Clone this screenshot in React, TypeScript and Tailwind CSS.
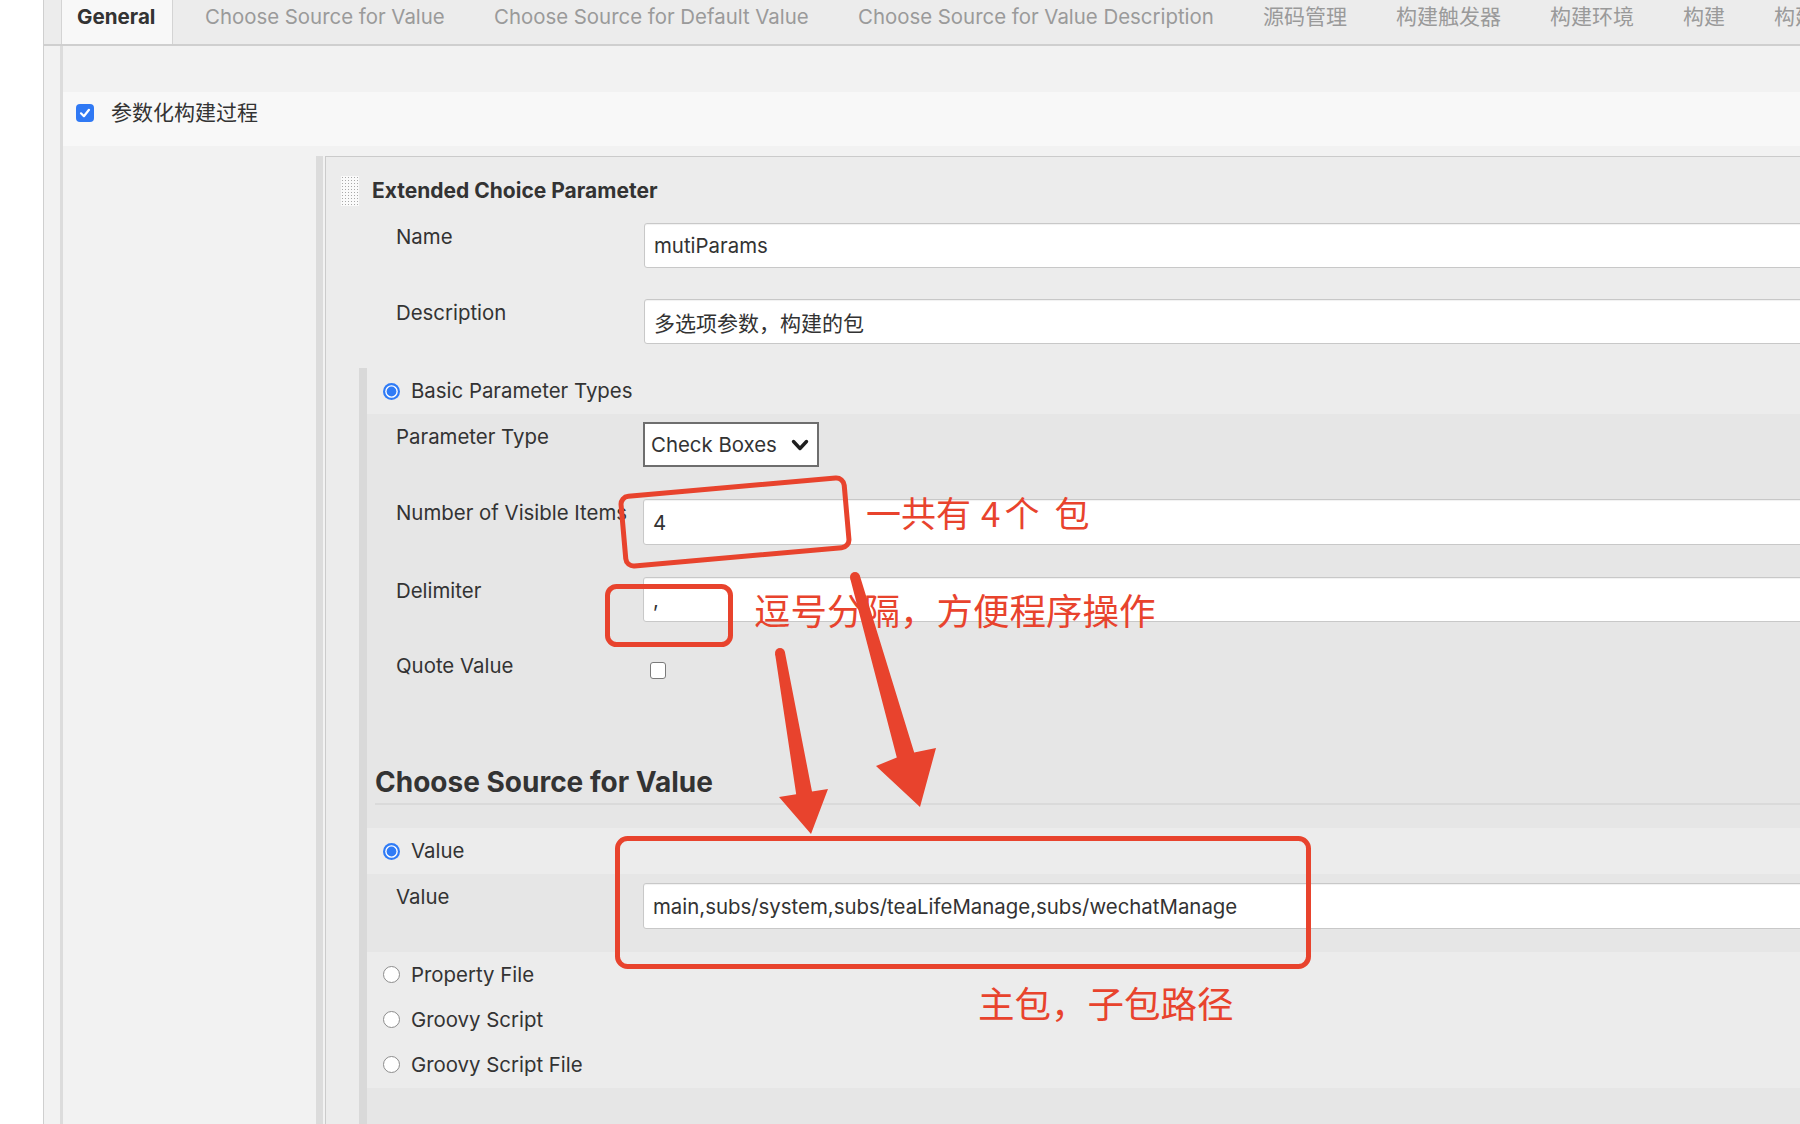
import React from "react";

const RED = "#e8432d";

function Radio({ checked }: { checked?: boolean }) {
  if (checked) {
    return (
      <svg width="17" height="17" viewBox="0 0 17 17" className="shrink-0">
        <circle cx="8.5" cy="8.5" r="8.5" fill="#2f7bf6" />
        <circle cx="8.5" cy="8.5" r="6.3" fill="#ffffff" />
        <circle cx="8.5" cy="8.5" r="4.9" fill="#2f7bf6" />
      </svg>
    );
  }
  return (
    <svg width="17" height="17" viewBox="0 0 17 17" className="shrink-0">
      <circle cx="8.5" cy="8.5" r="8" fill="#ffffff" stroke="#8c8c8c" strokeWidth="1" />
    </svg>
  );
}

function TextBox({ value, className = "" }: { value: string; className?: string }) {
  return (
    <input
      readOnly
      value={value}
      className={
        "flex-1 min-w-0 bg-white border border-[#c8c8c8] rounded-[3px] px-[9px] text-[#333] outline-none shadow-[inset_0_1px_1px_rgba(0,0,0,0.06)] " +
        className
      }
    />
  );
}

function Field({
  label,
  children,
  className = "",
}: {
  label: string;
  children: React.ReactNode;
  className?: string;
}) {
  return (
    <div className={"flex items-start " + className}>
      <div className="w-[248px] shrink-0 pt-[2px] text-[20.4px] leading-6 whitespace-nowrap">{label}</div>
      {children}
    </div>
  );
}

function RadioRow({ label, checked }: { label: string; checked?: boolean }) {
  return (
    <div className="h-[45px] flex items-center gap-[11px] pl-[16px]">
      <Radio checked={checked} />
      <span className="text-[20.4px] leading-6">{label}</span>
    </div>
  );
}

const tabs = [
  { label: "Choose Source for Value", w: "w-[289px]", cjk: false },
  { label: "Choose Source for Default Value", w: "w-[364px]", cjk: false },
  { label: "Choose Source for Value Description", w: "w-[405px]", cjk: false },
  { label: "源码管理", w: "w-[133px]", cjk: true },
  { label: "构建触发器", w: "w-[154px]", cjk: true },
  { label: "构建环境", w: "w-[133px]", cjk: true },
  { label: "构建", w: "w-[91px]", cjk: true },
  { label: "构建后操作", w: "w-[140px]", cjk: true },
];

function Annotations() {
  return (
    <>
      <svg
        width="1800"
        height="1124"
        viewBox="0 0 1800 1124"
        className="absolute left-0 top-0 pointer-events-none"
      >
        <g fill="none" stroke={RED} strokeWidth="5" strokeLinejoin="round">
          <rect x="-112" y="-35" width="224" height="70" rx="8" transform="translate(735 522) rotate(-5)" />
          <rect x="607.5" y="586.5" width="123" height="58" rx="9" />
          <rect x="617.5" y="838.5" width="691" height="128" rx="10" />
        </g>
        <g fill={RED}>
          {/* left arrow */}
          <circle cx="780" cy="653" r="5" />
          <polygon points="775.1,653.9 796.2,794.3 779,797 811,834 828,789 812,791.5 784.9,652.1" />
          {/* right arrow */}
          <circle cx="855" cy="577" r="5" />
          <polygon points="850.2,578.4 896.8,757.5 876,766 920,807 936,748 914.2,752.5 859.8,575.6" />
        </g>
      </svg>
      <div
        className="absolute left-[866px] top-[494px] flex items-baseline text-[35px] leading-none whitespace-nowrap font-['Noto_Sans_CJK_SC',sans-serif]"
        style={{ color: RED }}
      >
        <span>一共有</span>
        <span className="ml-[10px]">4</span>
        <span className="ml-[4px]">个</span>
        <span className="ml-[15px]">包</span>
      </div>
      <div
        className="absolute left-[754px] top-[592px] text-[36.5px] leading-none whitespace-nowrap font-['Noto_Sans_CJK_SC',sans-serif]"
        style={{ color: RED }}
      >
        逗号分隔，方便程序操作
      </div>
      <div
        className="absolute left-[978px] top-[985px] text-[36.5px] leading-none whitespace-nowrap font-['Noto_Sans_CJK_SC',sans-serif]"
        style={{ color: RED }}
      >
        主包，子包路径
      </div>
    </>
  );
}

export default function App() {
  return (
    <div className="relative w-[1800px] h-[1124px] overflow-hidden bg-white text-[#333] font-['Inter','Noto_Sans_CJK_SC',sans-serif]">
      <div className="flex h-full">
        <div className="w-[44px] shrink-0 bg-white border-r border-[#cfcfcf]" />

        <div className="w-[2200px] shrink-0 flex flex-col bg-[#f2f2f2]">
          {/* tab bar */}
          <div className="h-[46px] shrink-0 flex items-stretch bg-[#ececec] border-b-2 border-[#cfcfcf]">
            <div className="ml-[17px] w-[112px] shrink-0 bg-[#f8f8f8] border-x border-[#d4d4d4] pl-[15px] pt-[5px] text-[20.6px] leading-6 font-bold text-[#333]">
              General
            </div>
            <div className="ml-[32px] flex">
              {tabs.map((t) => (
                <div
                  key={t.label}
                  className={
                    t.w +
                    (t.cjk ? " text-[21px]" : " text-[20.4px]") +
                    " shrink-0 pt-[5px] leading-6 text-[#9a9a9a] whitespace-nowrap"
                  }
                >
                  {t.label}
                </div>
              ))}
            </div>
          </div>

          <div className="flex-1 ml-[16px] border-l-[3px] border-[#dcdcdc] flex flex-col">
            <div className="h-[46px] shrink-0" />
            <div className="h-[54px] shrink-0 bg-[#f8f8f8] flex items-start pt-[12px] pl-[13px] gap-[17px]">
              <div className="w-[18px] h-[18px] rounded-[4px] bg-[#3079f4] flex items-center justify-center">
                <svg width="14" height="14" viewBox="0 0 14 14">
                  <path d="M3 7.3 L5.9 10.2 L11 3.8" fill="none" stroke="#fff" strokeWidth="2.2" strokeLinecap="round" strokeLinejoin="round" />
                </svg>
              </div>
              <span className="text-[21px] leading-6 -mt-[3px]">参数化构建过程</span>
            </div>

            <div className="flex-1 flex pt-[10px] pl-[253px]">
              <div className="w-[7px] shrink-0 bg-[#dcdcdc]" />
              <div className="w-[2px] shrink-0" />
              <div className="flex-1 flex flex-col bg-[#ececec] border-l border-t border-[#cbcbcb]">
                {/* title */}
                <div className="flex items-center pt-[19px] pl-[15px]">
                  <svg width="18" height="30" className="shrink-0">
                    <defs>
                      <pattern id="dots" width="3" height="3" patternUnits="userSpaceOnUse">
                        <rect width="3" height="3" fill="#fafafa" />
                        <rect x="1" y="1" width="1" height="1" fill="#a9a9a9" />
                      </pattern>
                    </defs>
                    <rect width="18" height="30" fill="url(#dots)" />
                  </svg>
                  <span className="ml-[13px] text-[21px] leading-[30px] font-bold">Extended Choice Parameter</span>
                </div>

                <div className="pl-[70px]">
                  <Field label="Name" className="mt-[17px]">
                    <TextBox value="mutiParams" className="h-[45px] text-[20.4px]" />
                  </Field>
                  <Field label="Description" className="mt-[31px]">
                    <TextBox value="多选项参数，构建的包" className="h-[45px] text-[21px]" />
                  </Field>
                </div>

                {/* basic parameter types */}
                <div className="mt-[24px] ml-[33px] flex-1 flex">
                  <div className="w-[8px] shrink-0 bg-[#d9d9d9]" />
                  <div className="flex-1 flex flex-col">
                    <div className="h-[46px] shrink-0 flex items-center gap-[11px] pl-[16px]">
                      <Radio checked />
                      <span className="text-[20.4px] leading-6">Basic Parameter Types</span>
                    </div>

                    <div className="h-[414px] shrink-0 bg-[#e6e6e6] pt-[8px] pl-[8px]">
                      <div className="pl-[21px]">
                        <div className="flex items-start">
                          <div className="w-[247px] shrink-0 pt-[3px] text-[20.4px] leading-6">Parameter Type</div>
                          <div className="w-[176px] h-[45px] bg-white border-2 border-[#6e6e6e] flex items-center justify-between pl-[6px] pr-[8px]">
                            <span className="text-[20.4px] leading-6">Check Boxes</span>
                            <svg width="18" height="12" viewBox="0 0 18 12">
                              <path d="M2.5 2.5 L9 9.5 L15.5 2.5" fill="none" stroke="#1f1f1f" strokeWidth="3.4" strokeLinecap="round" strokeLinejoin="round" />
                            </svg>
                          </div>
                        </div>
                        <div className="flex items-start mt-[32px]">
                          <div className="w-[247px] shrink-0 pt-[2px] text-[20.4px] leading-6 whitespace-nowrap">Number of Visible Items</div>
                          <TextBox value="4" className="h-[46px] text-[20.4px]" />
                        </div>
                        <div className="flex items-start mt-[32px]">
                          <div className="w-[247px] shrink-0 pt-[2px] text-[20.4px] leading-6">Delimiter</div>
                          <TextBox value="," className="h-[45px] text-[20.4px]" />
                        </div>
                        <div className="flex items-start mt-[32px]">
                          <div className="w-[247px] shrink-0 text-[20.4px] leading-6">Quote Value</div>
                          <div className="ml-[7px] mt-[8px] w-[16px] h-[17px] bg-white border border-[#7a7a7a] rounded-[3px]" />
                        </div>
                      </div>
                      <div className="mt-[87px] pb-[5px] border-b-2 border-[#dadada] text-[28px] leading-[32px] font-bold text-[#333]">
                        Choose Source for Value
                      </div>
                    </div>

                    <div className="h-[46px] shrink-0 bg-[#ececec] flex items-center gap-[11px] pl-[16px]">
                      <Radio checked />
                      <span className="text-[20.4px] leading-6">Value</span>
                    </div>

                    <div className="h-[78px] shrink-0 bg-[#e6e6e6] pt-[9px] pl-[29px]">
                      <div className="flex items-start">
                        <div className="w-[247px] shrink-0 pt-[2px] text-[20.4px] leading-6">Value</div>
                        <TextBox value="main,subs/system,subs/teaLifeManage,subs/wechatManage" className="h-[46px] text-[20.4px]" />
                      </div>
                    </div>

                    <div className="shrink-0 bg-[#ececec] pb-[1px]">
                      <RadioRow label="Property File" />
                      <RadioRow label="Groovy Script" />
                      <RadioRow label="Groovy Script File" />
                    </div>

                    <div className="flex-1 bg-[#e6e6e6]" />
                  </div>
                </div>
              </div>
            </div>
          </div>
        </div>
      </div>

      <Annotations />
    </div>
  );
}
